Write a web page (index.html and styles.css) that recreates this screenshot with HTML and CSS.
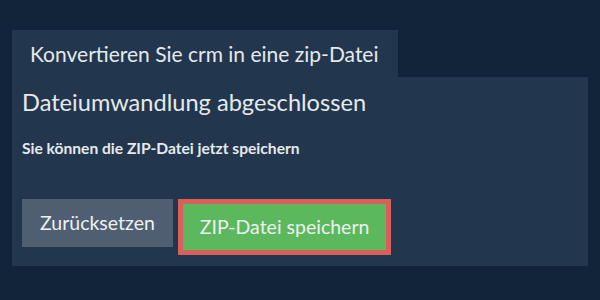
FILE: index.html
```html
<!DOCTYPE html>
<html lang="de">
<head>
<meta charset="utf-8">
<title>Konvertieren Sie crm in eine zip-Datei</title>
<link rel="stylesheet" href="styles.css">
</head>
<body>
<div class="wrap">
  <div class="tab">Konvertieren Sie crm in eine zip-Datei</div>
  <div class="panel">
    <h2 class="title">Dateiumwandlung abgeschlossen</h2>
    <p class="note">Sie können die ZIP-Datei jetzt speichern</p>
    <div class="actions">
      <button class="btn btn-reset">Zurücksetzen</button>
      <button class="btn btn-save">ZIP-Datei speichern</button>
    </div>
  </div>
</div>
</body>
</html>
```
FILE: styles.css
```css
html, body {
  margin: 0;
  padding: 0;
  background: #12243a;
  font-family: Lato, "Open Sans", sans-serif;
  color: #e6e9ec;
}
.wrap {
  padding: 30px 12px 0;
}
.tab {
  display: inline-block;
  background: #22374e;
  height: 47px;
  line-height: 47px;
  padding: 0 20px 0 18px;
  font-size: 21px;
  vertical-align: top;
}
.panel {
  background: #22374e;
  height: 189px;
  padding: 0 10px;
  box-sizing: border-box;
  overflow: hidden;
}
.title {
  margin: 0;
  padding-top: 10.5px;
  font-size: 23.6px;
  font-weight: 400;
  line-height: 1.2;
}
.note {
  margin: 23.5px 0 0;
  font-size: 15.6px;
  font-weight: 700;
  line-height: 1.2;
}
.actions {
  display: flex;
  align-items: flex-start;
  gap: 5px;
  margin-top: 41px;
}
.btn {
  font-family: Lato, "Open Sans", sans-serif;
  font-size: 19.5px;
  color: #eef0f2;
  border: 0;
  margin: 0;
  cursor: pointer;
}
.btn-reset {
  background: #4f5f71;
  height: 48px;
  line-height: 48px;
  padding: 0 18px;
}
.btn-save {
  background: #5cb85c;
  border: 5px solid #d9605a;
  height: 56px;
  line-height: 46px;
  padding: 0 17px;
  box-sizing: border-box;
}
```
